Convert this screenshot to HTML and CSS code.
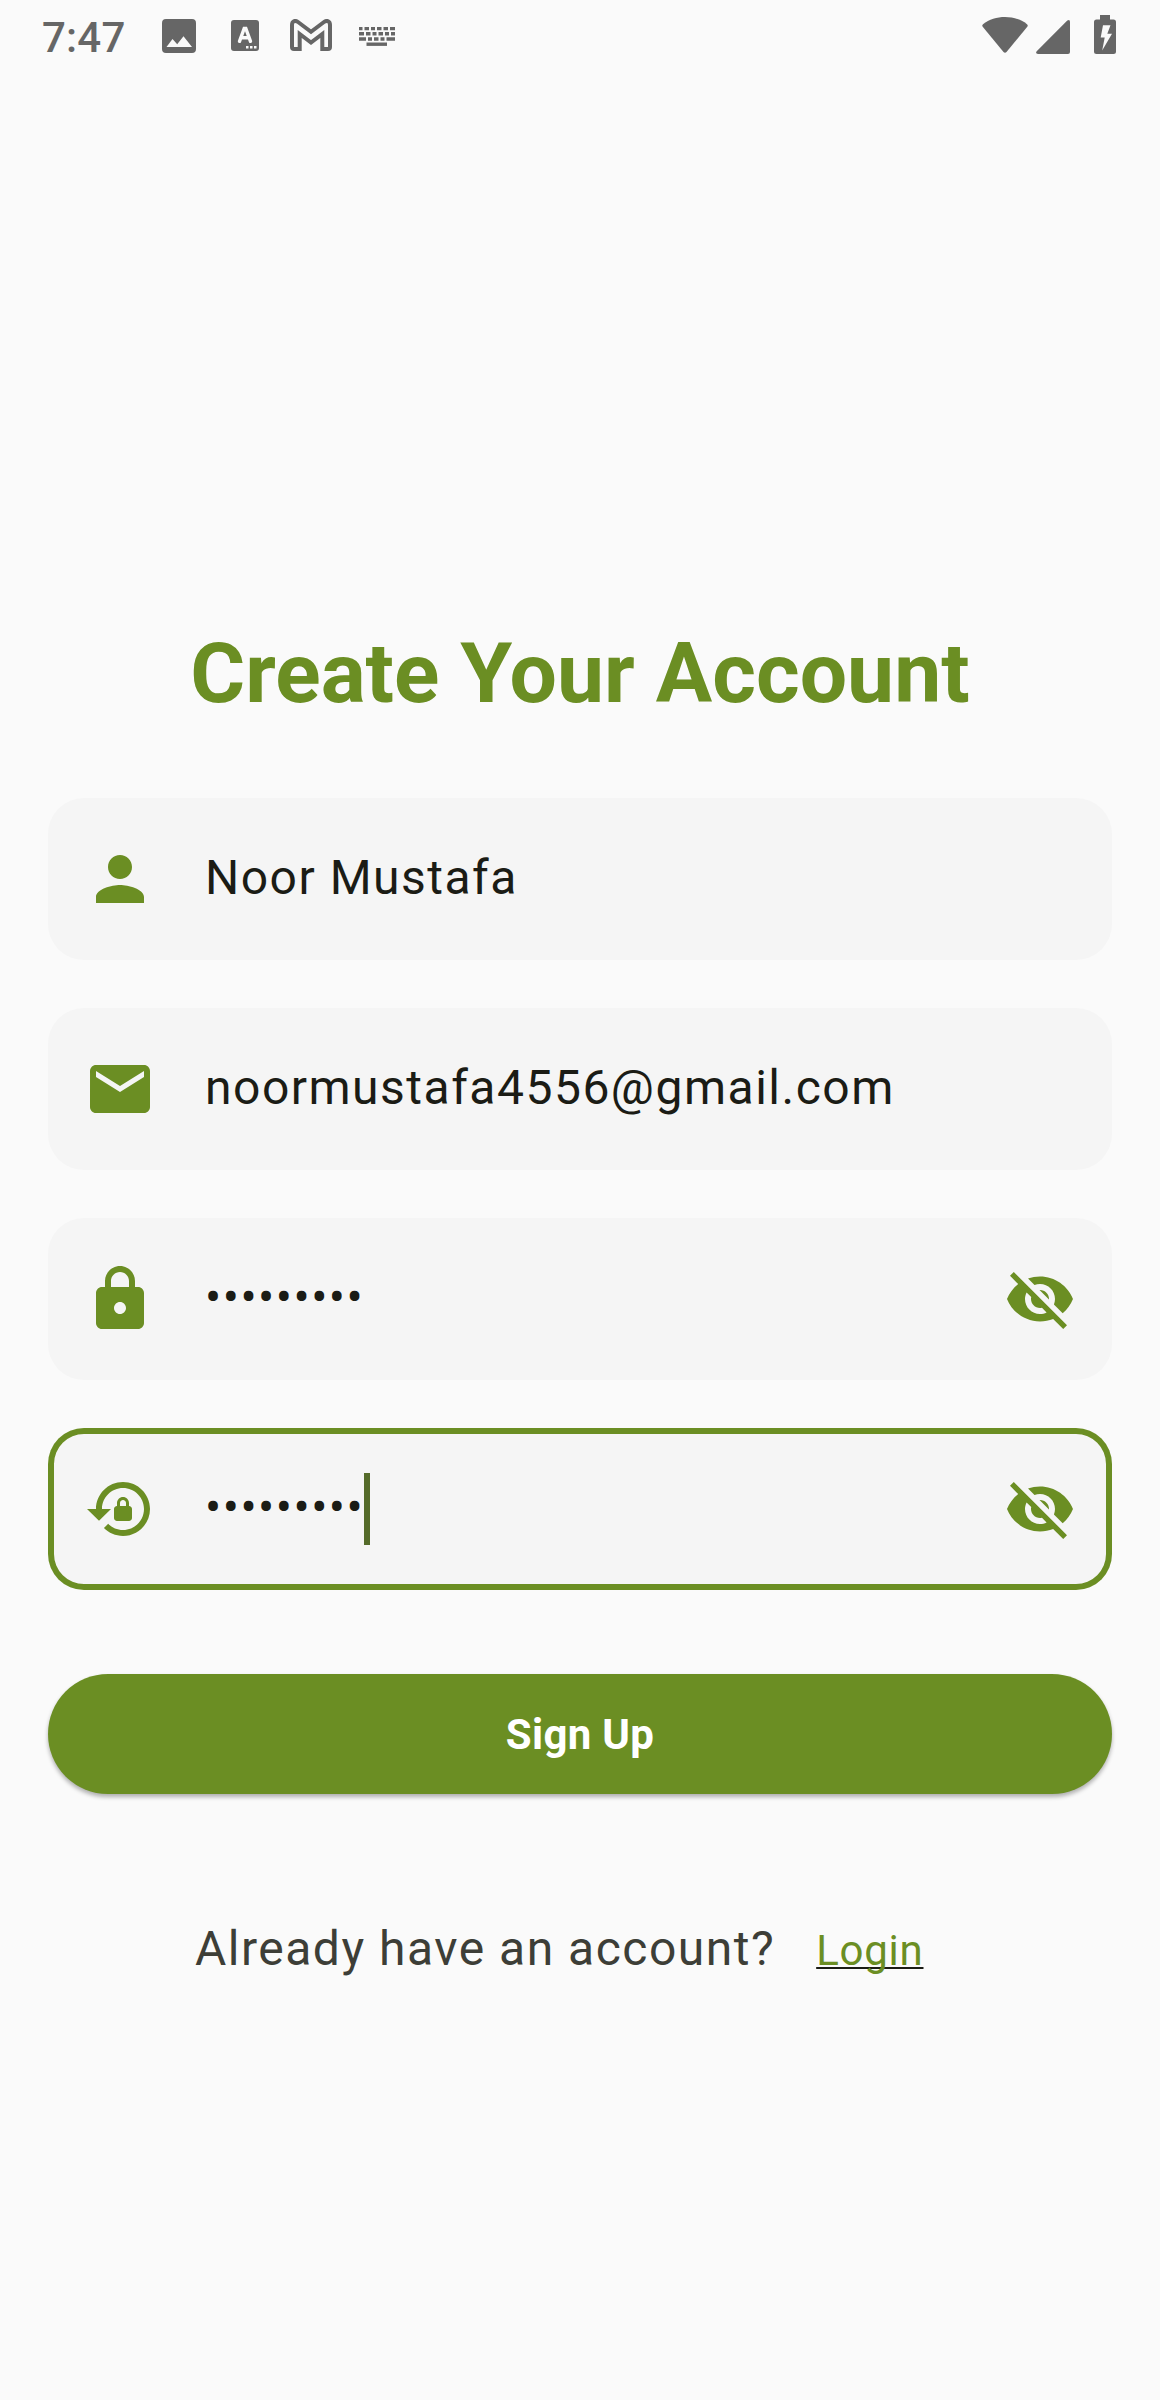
FILE: index.html
```html
<!DOCTYPE html>
<html lang="en">
<head>
<meta charset="utf-8">
<title>Create Your Account</title>
<link rel="stylesheet" href="styles.css">
</head>
<body>
<svg class="sprite" width="0" height="0" aria-hidden="true">
  <symbol id="eye-off" viewBox="0 0 24 24"><path d="M12 7c2.76 0 5 2.24 5 5 0 .65-.13 1.26-.36 1.83l2.92 2.92c1.51-1.26 2.7-2.89 3.43-4.75-1.73-4.39-6-7.5-11-7.5-1.4 0-2.74.25-3.98.7l2.16 2.16C10.74 7.13 11.35 7 12 7zM2 4.27l2.28 2.28.46.46C3.08 8.3 1.78 10.02 1 12c1.73 4.39 6 7.5 11 7.5 1.55 0 3.03-.3 4.38-.84l.42.42L19.73 22 21 20.73 3.27 3 2 4.27zM7.53 9.8l1.55 1.55c-.05.21-.08.43-.08.65 0 1.66 1.34 3 3 3 .22 0 .44-.03.65-.08l1.55 1.55c-.67.33-1.41.53-2.2.53-2.76 0-5-2.24-5-5 0-.79.2-1.53.53-2.2zm4.31-.78l3.15 3.15.02-.16c0-1.66-1.34-3-3-3l-.17.01z"/></symbol>
</svg>
<header class="status">
  <div class="status-left">
    <span class="clock">7:47</span>
    <svg class="i-photo" viewBox="0 0 34 34"><path fill-rule="evenodd" d="M4 0h26a4 4 0 0 1 4 4v26a4 4 0 0 1-4 4H4a4 4 0 0 1-4-4V4a4 4 0 0 1 4-4zM4.500 28h25.500l-8.500-10.700-6.300 8-4.700-5.300z"/></svg>
    <svg class="i-lang" viewBox="0 0 28 31"><rect width="28" height="31" rx="3"/><path d="M8.500 21.300 13.200 8.500h1.600l4.700 12.800M10.200 17.700h7.600" fill="none" stroke="#fafafa" stroke-width="3.400" stroke-linecap="round"/><path d="M15 26h2.500v2.500H15zM19 26h2.500v2.500H19zM23 26h2.500v2.500H23z" fill="#fafafa"/></svg>
    <svg class="i-mail" viewBox="0 0 42 32"><path d="M2 28V6C2 2.200 5 .800 8 3L21 12.800 34 3C37 .800 40 2.200 40 6v22q0 2-2 2h-5.700V15L21 23.500 9.700 15v15H4q-2 0-2-2z" fill="none" stroke="#666" stroke-width="4"/></svg>
    <svg class="i-keys" viewBox="0 0 36 19"><path d="M0 1.500h36" stroke-dasharray="3.500 2 4.500 2 4 2 4.500 2 4.500 2 5"/><path d="M0 6.700h36" stroke-dasharray="5 2 4.500 2 4 2 4.500 2 4 2 4"/><path d="M0 12h36" stroke-dasharray="7 2 4 2 4.500 2 4 2 8.500"/><path d="M7.500 17.200h20.500"/></svg>
  </div>
  <div class="status-right">
    <svg class="i-wifi" viewBox="0 0 46 36"><path d="M1 7.200C13-2.400 33-2.400 45 7.200q1.300 1.200.300 2.500L24.500 35q-1.500 1.600-3 0L.700 9.700Q-.300 8.400 1 7.200z"/></svg>
    <svg class="i-signal" viewBox="0 0 34 34"><path d="M.700 31.300 31.300.600Q34-1 34 2v30q0 2-2 2H2q-3-.300-1.300-2.700z"/></svg>
    <svg class="i-battery" viewBox="0 0 22 39"><path fill-rule="evenodd" d="M6 0h10v4.500h3.500Q22 4.500 22 7v29.500Q22 39 19.500 39h-17Q0 39 0 36.500V7q0-2.500 2.500-2.500H6zM9 10.300 6.700 22.500h4L8.200 35.500 18 18.700h-4.700l3.200-8.400z"/></svg>
  </div>
</header>
<main class="screen">
  <h1>Create Your Account</h1>
  <form class="form">
    <div class="field">
      <svg class="icon" viewBox="0 0 24 24"><path d="M12 12c2.210 0 4-1.790 4-4s-1.790-4-4-4-4 1.790-4 4 1.790 4 4 4zm0 2c-2.670 0-8 1.340-8 4v2h16v-2c0-2.660-5.330-4-8-4z"/></svg>
      <span class="value">Noor Mustafa</span>
    </div>
    <div class="field">
      <svg class="icon" viewBox="0 0 24 24"><path d="M20 4H4c-1.100 0-1.990.9-1.990 2L2 18c0 1.100.9 2 2 2h16c1.100 0 2-.9 2-2V6c0-1.100-.9-2-2-2zm0 4l-8 5-8-5V6l8 5 8-5v2z"/></svg>
      <span class="value">noormustafa4556@gmail.com</span>
    </div>
    <div class="field">
      <svg class="icon" viewBox="0 0 24 24"><path fill-rule="evenodd" d="M18 8h-1V6c0-2.760-2.240-5-5-5S7 3.240 7 6v2H6c-1.100 0-2 .9-2 2v10c0 1.100.9 2 2 2h12c1.100 0 2-.9 2-2V10c0-1.100-.9-2-2-2zm-6 9c-1.100 0-2-.9-2-2s.9-2 2-2 2 .9 2 2-.9 2-2 2zm3-9H9V6c0-1.660 1.340-3 3-3s3 1.340 3 3v2z"/></svg>
      <span class="value">•••••••••</span>
      <svg class="icon"><use href="#eye-off"/></svg>
    </div>
    <div class="field focused">
      <svg class="icon" viewBox="0 0 24 24"><path d="M13 3c-4.970 0-9 4.030-9 9H1l4 3.900L9 12H6c0-3.870 3.130-7 7-7s7 3.130 7 7-3.130 7-7 7c-1.930 0-3.680-.790-4.940-2.060l-1.420 1.420C8.270 19.990 10.510 21 13 21c4.970 0 9-4.030 9-9s-4.030-9-9-9z"/><path fill-rule="evenodd" d="M15 11v-1c0-1.100-.9-2-2-2s-2 .9-2 2v1c-.550 0-1 .450-1 1v3c0 .550.450 1 1 1h4c.550 0 1-.450 1-1v-3c0-.550-.450-1-1-1zm-1 0h-2v-1c0-.550.450-1 1-1s1 .450 1 1v1z"/></svg>
      <span class="value">•••••••••</span><i class="caret"></i>
      <svg class="icon"><use href="#eye-off"/></svg>
    </div>
    <button class="submit" type="button">Sign Up</button>
  </form>
  <p class="signin"><span>Already have an account?</span><a class="login">Login</a></p>
</main>
</body>
</html>
```
FILE: styles.css
```css
* { box-sizing: border-box; }

body {
  margin: 0;
  min-height: 2400px;
  background: #fafafa;
  font-family: Roboto, "Liberation Sans", sans-serif;
  color: #1b1c15;
}

svg { display: block; flex: none; }

.sprite { display: none; }

.status {
  display: flex;
  justify-content: space-between;
  height: 72px;
  padding: 0 44px 0 42px;
  color: #666;
  fill: #666;
}

.status-left,
.status-right {
  display: flex;
  align-items: flex-start;
}

.clock {
  width: 120px;
  margin-top: 13px;
  font-size: 42px;
  font-weight: 500;
  line-height: 49px;
  letter-spacing: .2px;
}

.i-photo { width: 34px; height: 34px; margin-top: 19px; }
.i-lang { width: 28px; height: 31px; margin: 20px 0 0 35px; }
.i-mail { width: 42px; height: 32px; margin: 19px 0 0 31px; }
.i-keys { width: 36px; height: 19px; margin: 27px 0 0 27px; stroke: #666; stroke-width: 3.400; fill: none; }
.i-wifi { width: 46px; height: 36px; margin-top: 17px; }
.i-signal { width: 34px; height: 34px; margin: 20px 0 0 8px; }
.i-battery { width: 22px; height: 39px; margin: 15px 0 0 24px; }

.screen { padding: 552px 48px 0; }

h1 {
  margin: 0 0 74px;
  color: #6b8e23;
  font-size: 84px;
  font-weight: 700;
  line-height: 100px;
  text-align: center;
  white-space: nowrap;
}

.form {
  display: flex;
  flex-direction: column;
  gap: 48px;
}

.field {
  display: flex;
  align-items: center;
  height: 162px;
  padding: 0 36px;
  border-radius: 36px;
  background: #f5f5f5;
}

.focused { box-shadow: inset 0 0 0 6px #6b8e23; }

.icon {
  width: 72px;
  height: 72px;
  fill: #6b8e23;
}

.icon:last-child { margin-left: auto; }

.value {
  margin: 0 0 2px 49px;
  font-size: 48px;
  line-height: 72px;
  letter-spacing: 1.5px;
}

.caret {
  width: 6px;
  height: 72px;
  background: #556b2a;
}

.submit {
  height: 120px;
  margin-top: 36px;
  padding: 2px 0 0;
  border: 0;
  border-radius: 60px;
  background: #6b8e23;
  box-shadow: 0 3px 4px rgba(0, 0, 0, .3);
  color: #fff;
  font: 700 42px/60px Roboto, "Liberation Sans", sans-serif;
  letter-spacing: .3px;
}

.signin {
  display: flex;
  align-items: baseline;
  margin: 119px 0 0 147px;
  color: #3d3e37;
  font-size: 48px;
  line-height: 72px;
  letter-spacing: 1.5px;
}

.login {
  margin-left: 41px;
  color: #6b8e23;
  font-size: 42px;
  letter-spacing: .75px;
  text-decoration: underline #1b1c15 2px;
  text-underline-offset: 2px;
  text-decoration-skip-ink: none;
}
```
